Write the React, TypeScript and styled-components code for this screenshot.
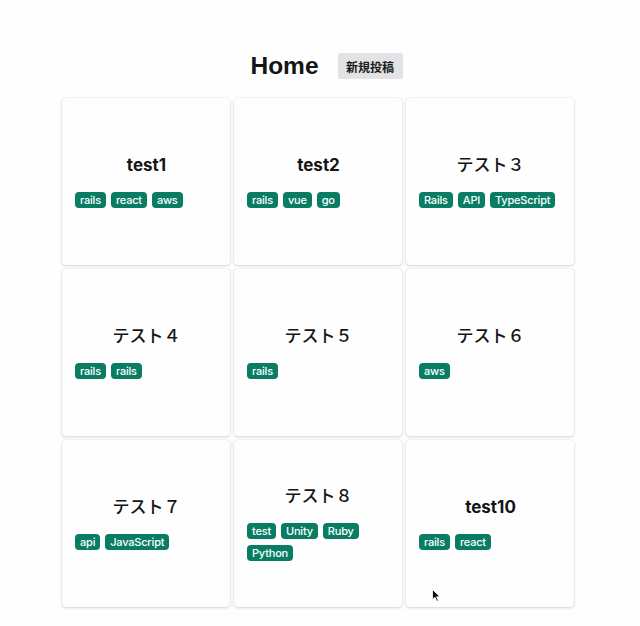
import React from "react";
import styled, { createGlobalStyle } from "styled-components";

const Global = createGlobalStyle`
  html, body { margin: 0; padding: 0; background: #fefefe; }
  body { font-family: "Inter", "Noto Sans CJK JP", sans-serif; color: #1a1a1a; }
`;

const Page = styled.div`
  position: relative;
  width: 640px;
  height: 626px;
  overflow: hidden;
`;

const Header = styled.header`
  display: flex;
  justify-content: center;
  align-items: center;
  gap: 19px;
  padding: 52px 0 0 13px;
  height: 28px;
`;

const Title = styled.h1`
  margin: 0;
  font-family: "Liberation Sans", "Noto Sans CJK JP", sans-serif;
  font-size: 24.5px;
  font-weight: 700;
  color: #151515;
  line-height: 28px;
`;

const NewButton = styled.button`
  height: 26px;
  width: 65px;
  padding: 0;
  border: none;
  border-radius: 2px;
  background: #e3e3e6;
  color: #1a1a1a;
  font-family: "Noto Sans CJK JP", sans-serif;
  font-size: 12px;
  font-weight: 700;
`;

const Grid = styled.main`
  display: grid;
  grid-template-columns: repeat(3, 168px);
  grid-auto-rows: 167px;
  gap: 4px;
  margin: 18px 0 0 62px;
`;

const Card = styled.article`
  background: #fefefe;
  border-radius: 4px;
  box-shadow: 0 1px 3px rgba(40, 40, 80, 0.18), 0 0 1px rgba(40, 40, 80, 0.2);
  display: flex;
  flex-direction: column;
  justify-content: center;
  padding: 0 12px 0 13px;
`;

const CardTitle = styled.h2<{ $jp?: boolean }>`
  margin: 0 0 17px;
  text-align: center;
  font-size: 17px;
  font-weight: ${(p) => (p.$jp ? 500 : 700)};
  line-height: 20px;
  color: #151515;
`;

const Tags = styled.div`
  display: flex;
  flex-wrap: wrap;
  gap: 6px 5px;
`;

const Tag = styled.span`
  display: inline-flex;
  align-items: center;
  height: 16px;
  padding: 0 5px;
  border-radius: 4px;
  background: #087d64;
  color: #fff;
  font-size: 11px;
  font-weight: 500;
  letter-spacing: -0.2px;
`;

const Cursor = styled.svg`
  position: absolute;
  left: 432px;
  top: 589px;
`;

const posts = [
  { title: "test1", tags: ["rails", "react", "aws"] },
  { title: "test2", tags: ["rails", "vue", "go"] },
  { title: "テスト３", jp: true, tags: ["Rails", "API", "TypeScript"] },
  { title: "テスト４", jp: true, tags: ["rails", "rails"] },
  { title: "テスト５", jp: true, tags: ["rails"] },
  { title: "テスト６", jp: true, tags: ["aws"] },
  { title: "テスト７", jp: true, tags: ["api", "JavaScript"] },
  { title: "テスト８", jp: true, tags: ["test", "Unity", "Ruby", "Python"] },
  { title: "test10", tags: ["rails", "react"] },
];

export default function App() {
  return (
    <Page>
      <Global />
      <Header>
        <Title>Home</Title>
        <NewButton>新規投稿</NewButton>
      </Header>
      <Grid>
        {posts.map((p, i) => (
          <Card key={i}>
            <CardTitle $jp={p.jp}>{p.title}</CardTitle>
            <Tags>
              {p.tags.map((t, j) => (
                <Tag key={j}>{t}</Tag>
              ))}
            </Tags>
          </Card>
        ))}
      </Grid>
      <Cursor width="9" height="13" viewBox="0 0 9 13">
        <path d="M0.5 0.5 L0.5 10.5 L3 8.3 L4.8 12.3 L6.3 11.6 L4.6 7.8 L8 7.8 Z" fill="#111" stroke="#fff" strokeWidth="0.8" />
      </Cursor>
    </Page>
  );
}
